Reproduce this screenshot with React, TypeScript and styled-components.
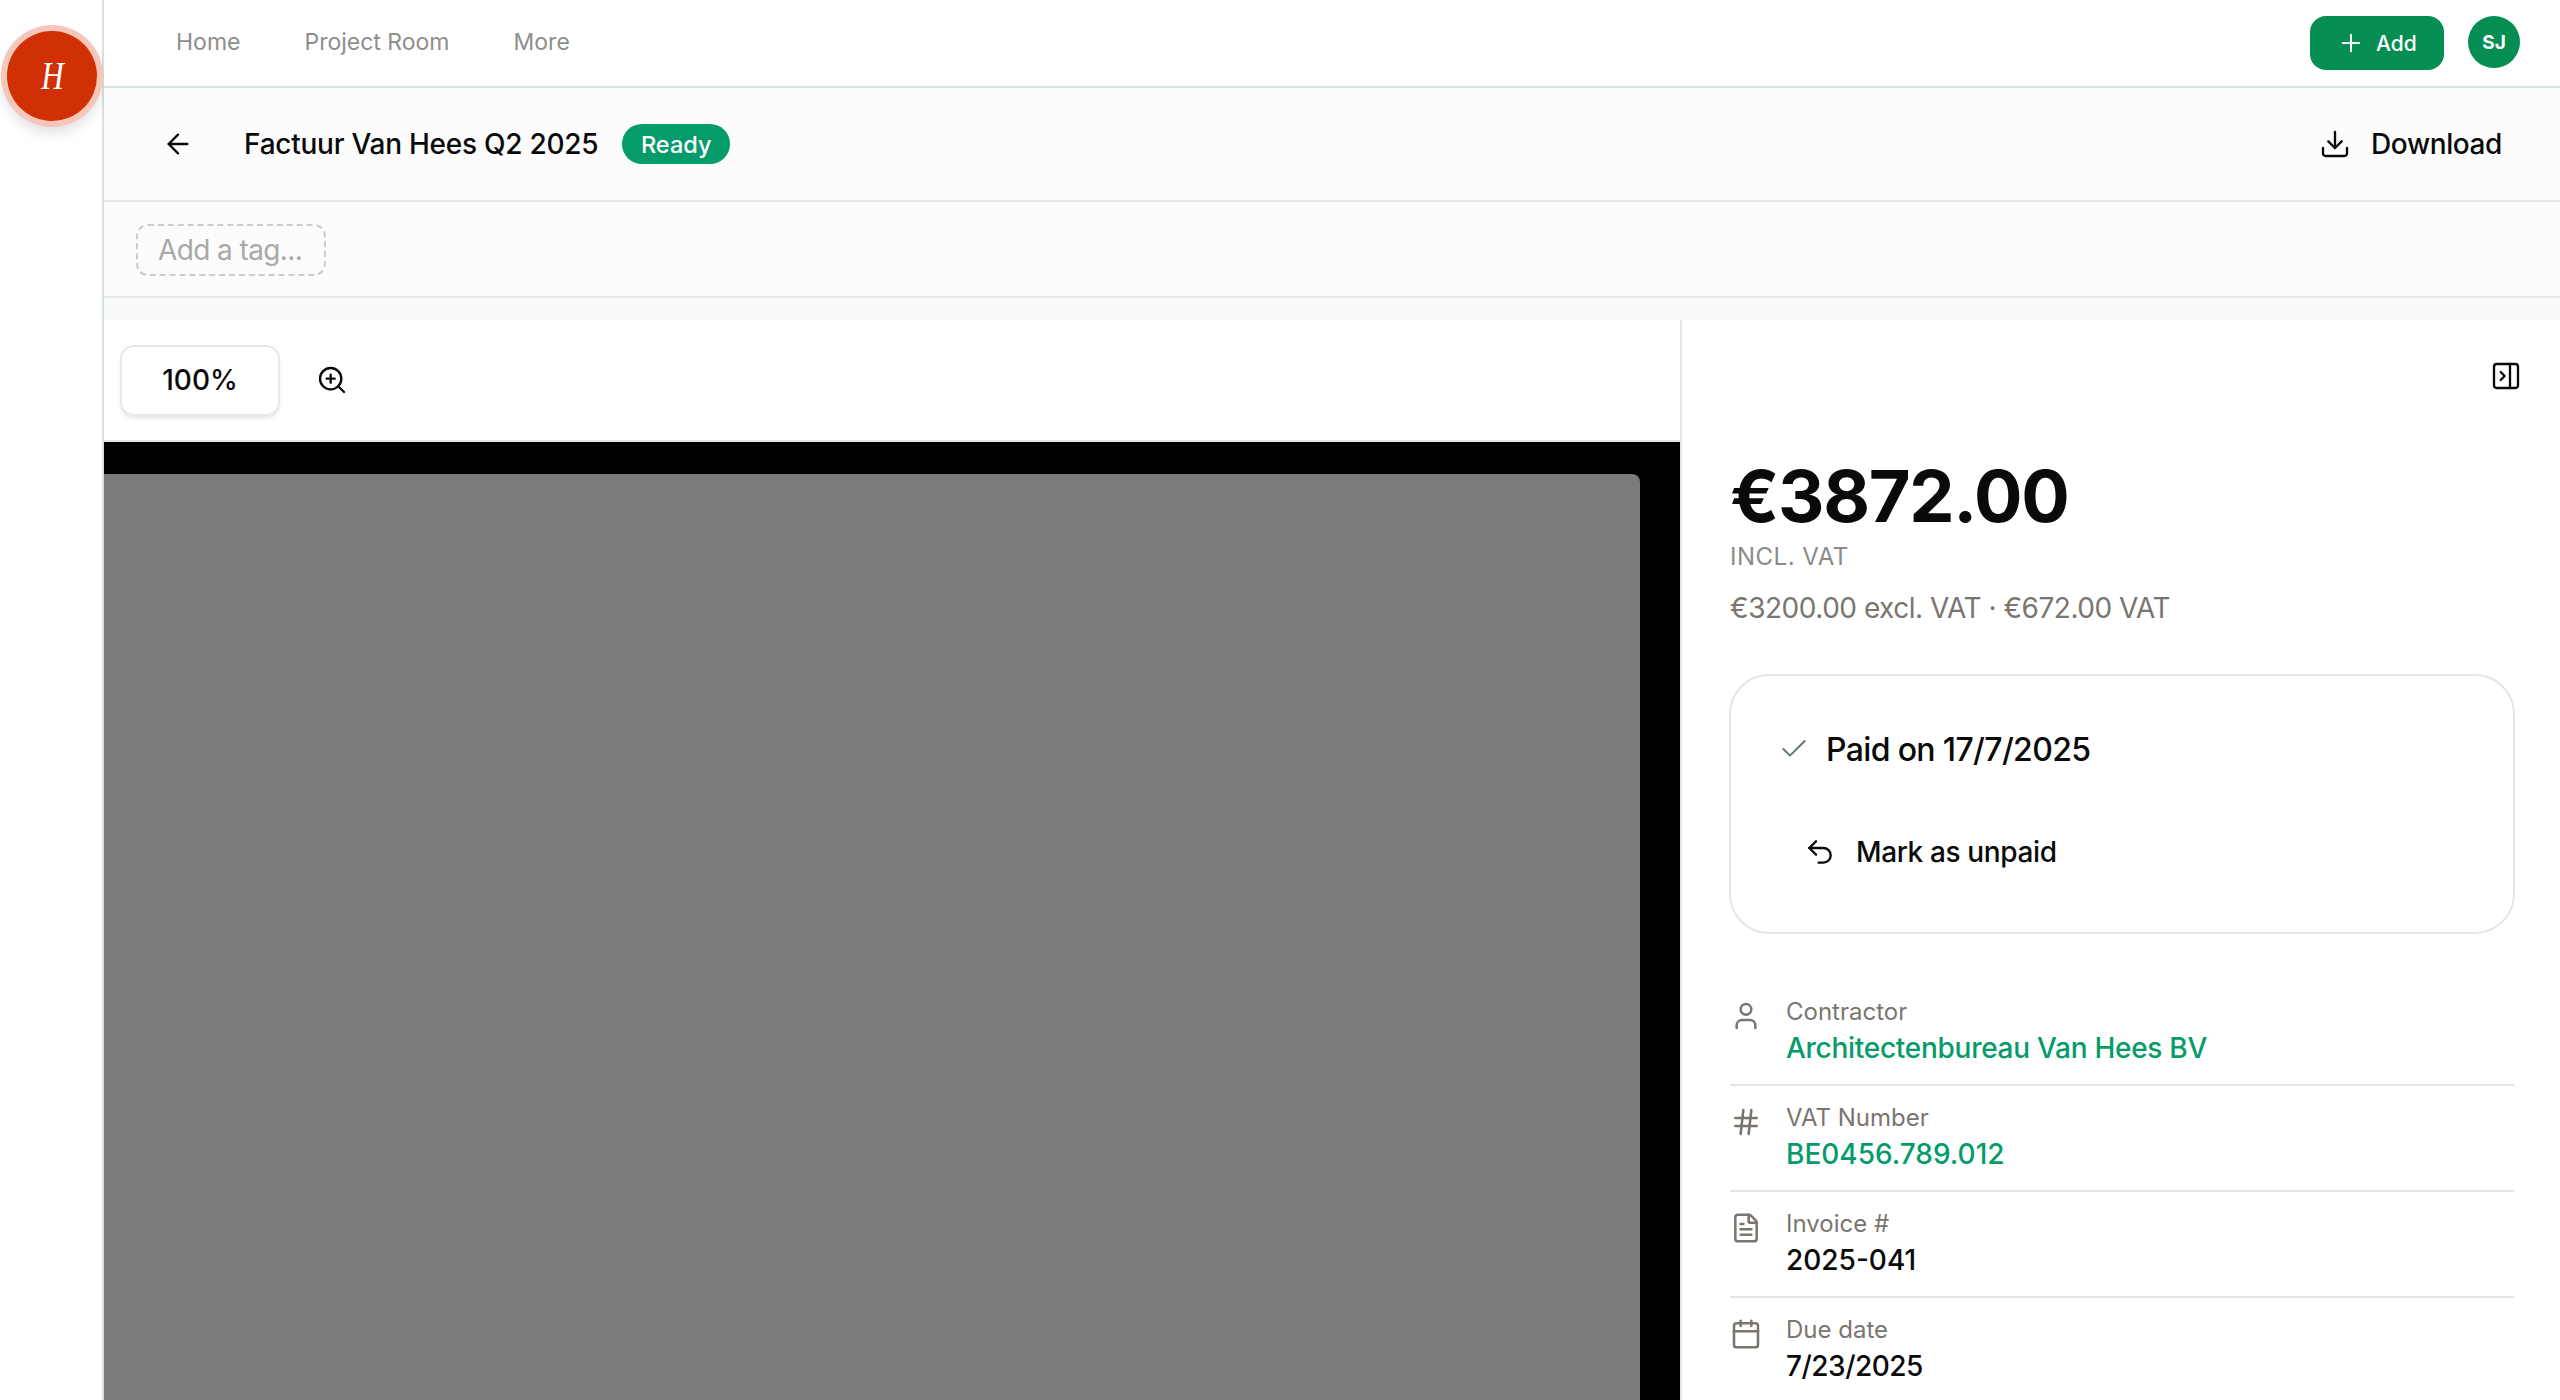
import React from 'react';
import styled, { createGlobalStyle } from 'styled-components';
import { ArrowLeft, Calendar, Check, Download, FileText, Hash, PanelRightClose, Plus, Undo2, User, ZoomIn } from 'lucide-react';

const GlobalStyle = createGlobalStyle`
  html, body {
    margin: 0;
    height: 100%;
    overflow: hidden;
    background: #ffffff;
  }
  body {
    font-family: Inter, "Liberation Sans", sans-serif;
    color: #0a0a0a;
  }
  * {
    box-sizing: border-box;
  }
`;

const Shell = styled.div`
  display: flex;
  width: 2560px;
  height: 1400px;
  overflow: hidden;
`;

const Sidebar = styled.aside`
  flex: 0 0 104px;
  padding: 31px 0 0 7px;
  border-right: 2px solid #d5e2dd;
  background: #ffffff;
`;

const Logo = styled.div`
  display: flex;
  align-items: center;
  justify-content: center;
  width: 90px;
  height: 90px;
  border-radius: 50%;
  background: #d03003;
  box-shadow: 0 0 0 6px #f5c6b9, 0 8px 14px 4px rgba(0, 0, 0, 0.12);
`;

const LogoLetter = styled.span`
  display: inline-block;
  font-family: "Liberation Serif", serif;
  font-style: italic;
  font-size: 40px;
  line-height: 1;
  color: #ffffff;
  transform: scaleX(0.78);
`;

const Main = styled.div`
  flex: 1;
  min-width: 0;
  display: flex;
  flex-direction: column;
`;

const Nav = styled.nav`
  flex: 0 0 88px;
  display: flex;
  justify-content: space-between;
  padding: 16px 40px 0 72px;
  border-bottom: 2px solid #d5e2dd;
  background: #ffffff;
`;

const NavLinks = styled.div`
  display: flex;
  gap: 64px;
  height: 52px;
  align-items: center;
`;

const NavLink = styled.a`
  font-size: 23px;
  font-weight: 400;
  color: #8e8e8a;
`;

const NavActions = styled.div`
  display: flex;
  gap: 24px;
  align-items: flex-start;
`;

const AddButton = styled.button`
  display: flex;
  align-items: center;
  gap: 11px;
  width: 134px;
  height: 54px;
  padding: 0 0 0 27px;
  border: none;
  border-radius: 16px;
  background: #058d52;
  color: #ffffff;
  font-family: inherit;
  font-size: 21px;
  font-weight: 500;
`;

const Avatar = styled.div`
  display: flex;
  align-items: center;
  justify-content: center;
  width: 52px;
  height: 52px;
  border-radius: 50%;
  background: #058d52;
  color: #ffffff;
  font-size: 19px;
  font-weight: 700;
`;

const Header = styled.header`
  flex: 0 0 114px;
  display: flex;
  align-items: center;
  padding: 0 58px 0 58px;
  border-bottom: 2px solid #e5e5e5;
  background: #fcfcfc;
`;

const BackButton = styled.span`
  display: flex;
  margin-right: 50px;
  color: #0a0a0a;
`;

const Title = styled.h1`
  margin: 0;
  font-size: 28px;
  font-weight: 500;
  letter-spacing: -0.25px;
`;

const StatusBadge = styled.span`
  display: flex;
  align-items: center;
  height: 40px;
  margin-left: 24px;
  padding: 0 18.5px;
  border-radius: 20px;
  background: #069b6b;
  color: #ffffff;
  font-size: 23.5px;
  font-weight: 500;
`;

const DownloadLink = styled.a`
  display: flex;
  align-items: center;
  gap: 20px;
  margin-left: auto;
  font-size: 28px;
  font-weight: 500;
  letter-spacing: -0.4px;
`;

const TagRow = styled.div`
  flex: 0 0 96px;
  padding: 22px 0 0 32px;
  border-bottom: 2px solid #e5e5e5;
  background: #fcfcfc;
`;

const TagInput = styled.div`
  display: flex;
  align-items: center;
  width: 190px;
  height: 52px;
  padding: 0 20px;
  border: 2px dashed #cccccc;
  border-radius: 12px;
  color: #a9a9a6;
  font-size: 28px;
  letter-spacing: -0.6px;
  white-space: nowrap;
`;

const Workspace = styled.div`
  flex: 1;
  min-height: 0;
  display: flex;
  margin-top: 22px;
  background: #ffffff;
  box-shadow: 0 -22px 0 #f8f9f9;
`;

const Viewer = styled.section`
  flex: 0 0 1578px;
  display: flex;
  flex-direction: column;
  border-right: 2px solid #e5e5e5;
`;

const ViewerToolbar = styled.div`
  flex: 0 0 122px;
  display: flex;
  align-items: center;
  gap: 36px;
  padding-left: 16px;
  border-bottom: 2px solid #e5e5e5;
`;

const ZoomLevel = styled.button`
  width: 160px;
  height: 71px;
  border: 2px solid #e8e8e8;
  border-radius: 14px;
  background: #ffffff;
  box-shadow: 0 3px 3px rgba(0, 0, 0, 0.08);
  color: #0a0a0a;
  font-family: inherit;
  font-size: 28px;
  font-weight: 500;
`;

const Canvas = styled.div`
  flex: 1;
  min-height: 0;
  padding: 32px 40px 0 0;
  background: #000000;
`;

const PageSheet = styled.div`
  height: 100%;
  border-radius: 0 8px 0 0;
  background: #7b7b79;
`;

const Details = styled.aside`
  flex: 1;
  min-width: 0;
  padding: 40px 46px 0 48px;
`;

const DetailsTop = styled.div`
  display: flex;
  justify-content: flex-end;
  height: 32px;
  margin: 0 -8px 62px 0;
`;

const Price = styled.div`
  font-size: 72px;
  line-height: 84px;
  font-weight: 700;
  letter-spacing: -1.3px;
`;

const PriceNote = styled.div`
  margin-top: 3px;
  font-size: 24px;
  line-height: 32px;
  letter-spacing: 0.5px;
  color: #8a8a86;
`;

const PriceBreakdown = styled.div`
  margin-top: 15px;
  font-size: 28px;
  line-height: 40px;
  letter-spacing: -0.48px;
  color: #7a756f;
`;

const PaymentCard = styled.div`
  display: flex;
  flex-direction: column;
  gap: 49px;
  height: 260px;
  margin: 46px -1px 46px -1px;
  padding: 49px 47px 0;
  border: 2px solid #e5e5e5;
  border-radius: 40px;
`;

const PaidLine = styled.div`
  display: flex;
  align-items: center;
  gap: 16px;
  height: 48px;
  font-size: 32px;
  font-weight: 500;
  letter-spacing: -0.65px;
  color: #0a0a0a;

  svg {
    color: #5f7a74;
  }
`;

const UnpaidButton = styled.div`
  display: flex;
  align-items: center;
  gap: 20px;
  height: 60px;
  padding-left: 26px;
  font-size: 28px;
  font-weight: 500;
  letter-spacing: -0.37px;
`;

const DetailRow = styled.div<{ $last?: boolean }>`
  display: flex;
  gap: 24px;
  padding: 16px 0;
  border-bottom: 2px solid ${(p) => (p.$last ? 'transparent' : '#e5e5e5')};
`;

const RowIcon = styled.span`
  display: flex;
  margin-top: 4px;
  color: #7a756f;
`;

const RowLabel = styled.div`
  font-size: 24px;
  line-height: 32px;
  color: #7a756f;
`;

const RowValue = styled.div<{ $link?: boolean; $spacing?: number }>`
  font-size: 28px;
  line-height: 40px;
  font-weight: 500;
  letter-spacing: ${(p) => p.$spacing ?? 0}px;
  color: ${(p) => (p.$link ? '#069b6b' : '#0a0a0a')};
`;

const rows = [
  { icon: User, label: 'Contractor', value: 'Architectenbureau Van Hees BV', link: true, spacing: -0.28 },
  { icon: Hash, label: 'VAT Number', value: 'BE0456.789.012', link: true, spacing: 0 },
  { icon: FileText, label: 'Invoice #', value: '2025-041', link: false, spacing: 0 },
  { icon: Calendar, label: 'Due date', value: '7/23/2025', link: false, spacing: -0.5 },
];

const App: React.FC = () => {
  return (
    <Shell>
      <GlobalStyle />
      <Sidebar>
        <Logo>
          <LogoLetter>H</LogoLetter>
        </Logo>
      </Sidebar>
      <Main>
        <Nav>
          <NavLinks>
            <NavLink>Home</NavLink>
            <NavLink>Project Room</NavLink>
            <NavLink>More</NavLink>
          </NavLinks>
          <NavActions>
            <AddButton>
              <Plus size={28} strokeWidth={1.75} />
              Add
            </AddButton>
            <Avatar>SJ</Avatar>
          </NavActions>
        </Nav>
        <Header>
          <BackButton>
            <ArrowLeft size={32} strokeWidth={1.75} />
          </BackButton>
          <Title>Factuur Van Hees Q2 2025</Title>
          <StatusBadge>Ready</StatusBadge>
          <DownloadLink>
            <Download size={32} strokeWidth={1.75} />
            Download
          </DownloadLink>
        </Header>
        <TagRow>
          <TagInput>Add a tag...</TagInput>
        </TagRow>
        <Workspace>
          <Viewer>
            <ViewerToolbar>
              <ZoomLevel>100%</ZoomLevel>
              <ZoomIn size={32} strokeWidth={1.75} />
            </ViewerToolbar>
            <Canvas>
              <PageSheet />
            </Canvas>
          </Viewer>
          <Details>
            <DetailsTop>
              <PanelRightClose size={32} strokeWidth={1.75} />
            </DetailsTop>
            <Price>€3872.00</Price>
            <PriceNote>INCL. VAT</PriceNote>
            <PriceBreakdown>€3200.00 excl. VAT · €672.00 VAT</PriceBreakdown>
            <PaymentCard>
              <PaidLine>
                <Check size={32} strokeWidth={1.5} />
                Paid on 17/7/2025
              </PaidLine>
              <UnpaidButton>
                <Undo2 size={32} strokeWidth={1.75} />
                Mark as unpaid
              </UnpaidButton>
            </PaymentCard>
            {rows.map((row, i) => (
              <DetailRow key={row.label} $last={i === rows.length - 1}>
                <RowIcon>
                  <row.icon size={32} strokeWidth={1.9} />
                </RowIcon>
                <div>
                  <RowLabel>{row.label}</RowLabel>
                  <RowValue $link={row.link} $spacing={row.spacing}>{row.value}</RowValue>
                </div>
              </DetailRow>
            ))}
          </Details>
        </Workspace>
      </Main>
    </Shell>
  );
};

export default App;
